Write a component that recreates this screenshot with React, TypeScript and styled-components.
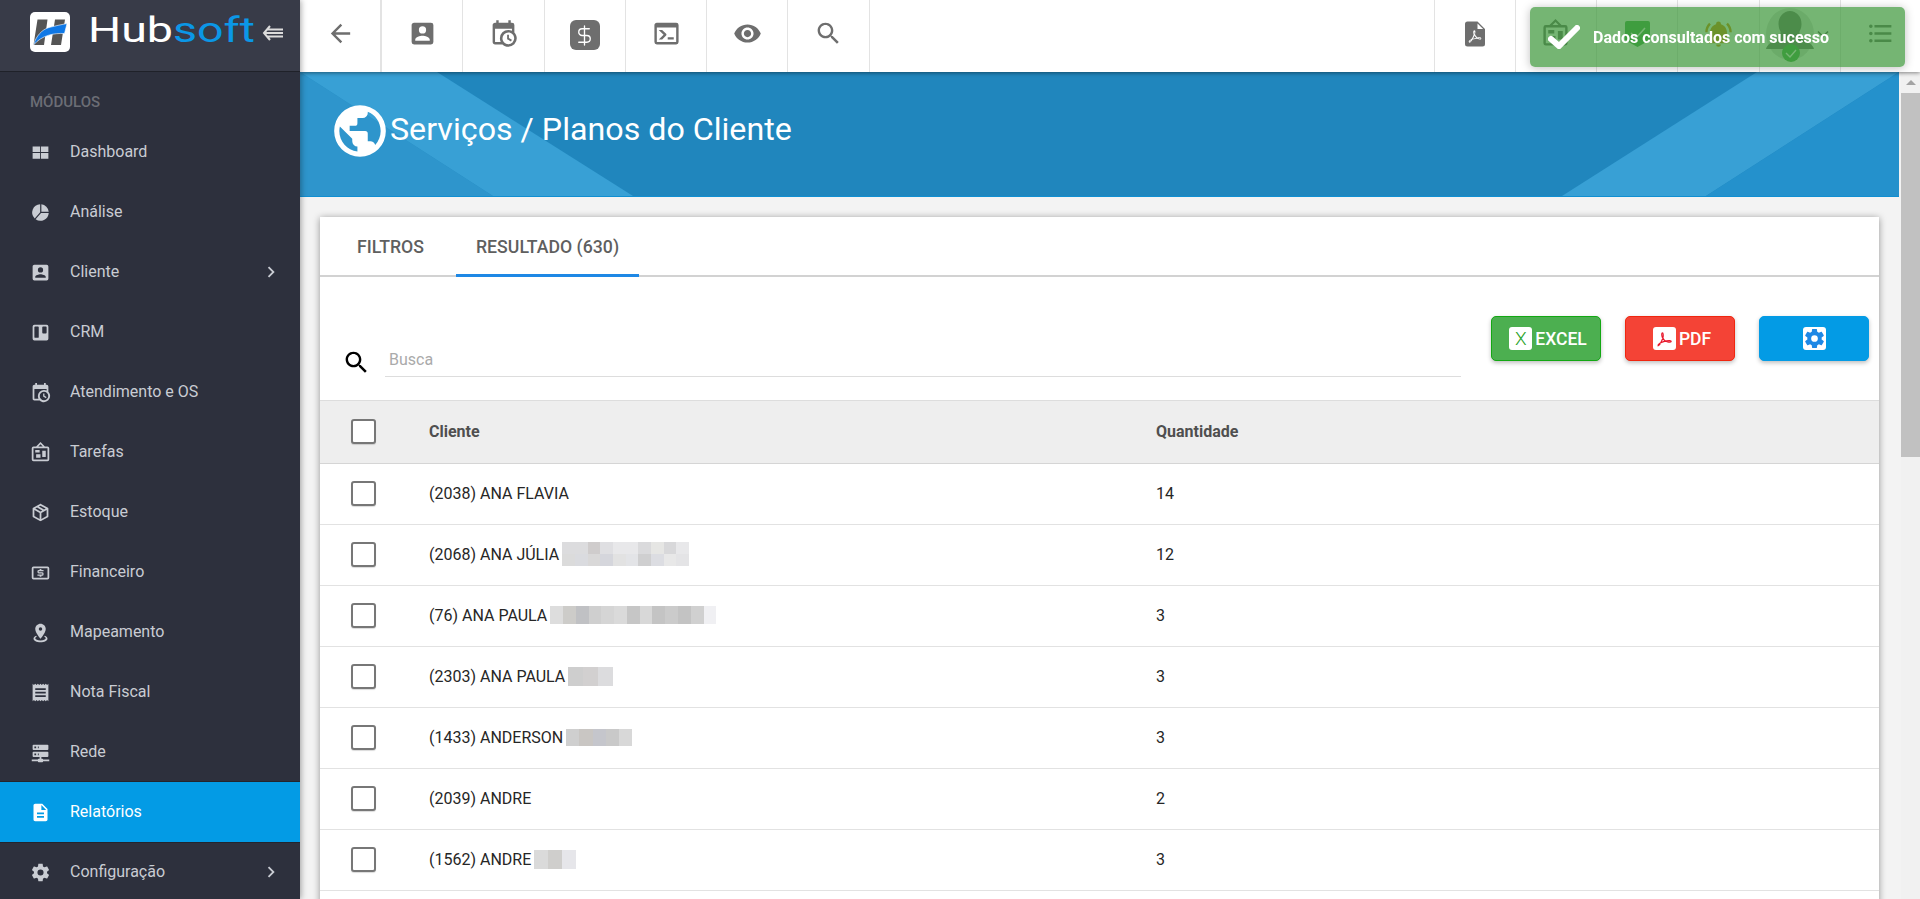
import React, { FC } from 'react'
import styled, { createGlobalStyle } from 'styled-components'
import { DollarSign } from 'lucide-react'

let paths = {
	back: 'M20 11H7.83l5.59-5.59L12 4l-8 8 8 8 1.41-1.41L7.83 13H20v-2z',
	accountBox: 'M6,17C6,15 10,13.9 12,13.9C14,13.9 18,15 18,17V18H6M15,9A3,3 0 0,1 12,12A3,3 0 0,1 9,9A3,3 0 0,1 12,6A3,3 0 0,1 15,9M3,5V19A2,2 0 0,0 5,21H19A2,2 0 0,0 21,19V5A2,2 0 0,0 19,3H5C3.89,3 3,3.9 3,5Z',
	calendarClock: 'M15,13H16.5V15.82L18.94,17.23L18.19,18.53L15,16.69V13M19,8H5V19H9.67C9.24,18.09 9,17.07 9,16A7,7 0 0,1 16,9C17.07,9 18.09,9.24 19,9.67V8M5,21C3.89,21 3,20.1 3,19V5C3,3.89 3.89,3 5,3H6V1H8V3H16V1H18V3H19A2,2 0 0,1 21,5V11.1C22.24,12.36 23,14.09 23,16A7,7 0 0,1 16,23C14.09,23 12.36,22.24 11.1,21H5M16,11.15A4.85,4.85 0 0,0 11.15,16C11.15,18.68 13.32,20.85 16,20.85A4.85,4.85 0 0,0 20.85,16C20.85,13.32 18.68,11.15 16,11.15Z',
	console: 'M20,19V7H4V19H20M20,3A2,2 0 0,1 22,5V19A2,2 0 0,1 20,21H4A2,2 0 0,1 2,19V5C2,3.89 2.9,3 4,3H20M13,17V15H18V17H13M9.58,13L5.57,9H8.4L11.7,12.3C12.09,12.69 12.09,13.33 11.7,13.72L8.42,17H5.59L9.58,13Z',
	eye: 'M12 4.5C7 4.5 2.73 7.61 1 12c1.73 4.39 6 7.5 11 7.5s9.27-3.11 11-7.5c-1.73-4.39-6-7.5-11-7.5zM12 17c-2.76 0-5-2.24-5-5s2.24-5 5-5 5 2.24 5 5-2.24 5-5 5zm0-8c-1.66 0-3 1.34-3 3s1.34 3 3 3 3-1.34 3-3-1.34-3-3-3z',
	search: 'M15.5 14h-.79l-.28-.27C15.41 12.59 16 11.11 16 9.5 16 5.91 13.09 3 9.5 3S3 5.91 3 9.5 5.91 16 9.5 16c1.61 0 3.09-.59 4.23-1.57l.27.28v.79l5 4.99L20.49 19l-4.99-5zm-6 0C7.01 14 5 11.99 5 9.5S7.01 5 9.5 5 14 7.01 14 9.5 11.99 14 9.5 14z',
	filePdf: 'M14,2L20,8V20A2,2 0 0,1 18,22H6A2,2 0 0,1 4,20V4A2,2 0 0,1 6,2H14M14,3.5V8H18.5L14,3.5M10.92,12.31C10.68,11.54 10.15,9.08 11.55,9.04C12.95,9 12.03,12.16 12.03,12.16C12.42,13.65 14.05,14.72 14.05,14.72C14.55,14.57 17.4,14.24 17,15.72C16.57,17.2 13.5,15.81 13.5,15.81C11.55,15.95 10.09,16.47 10.09,16.47C8.96,18.58 7.64,19.5 7.1,18.61C6.43,17.5 9.23,16.07 9.23,16.07C10.68,13.72 10.9,12.35 10.92,12.31M11.57,13.15C11.17,14.45 10.37,15.84 10.37,15.84C11.22,15.5 13.08,15.11 13.08,15.11C11.94,14.11 11.59,13.16 11.57,13.15M14.71,15.32C14.71,15.32 16.46,15.97 16.5,15.71C16.57,15.44 15.17,15.2 14.71,15.32M9.05,16.81C8.28,17.11 7.54,18.39 7.72,18.39C7.9,18.4 8.63,17.79 9.05,16.81M11.57,10.39C11.57,10.39 11.13,10.39 11.57,12.16C11.9,11.24 11.57,10.39 11.57,10.39Z',
	board: 'M12.04,2.5L9.53,5H14.53L12.04,2.5M4,7V20H20V7H4M12,0L17,5V5H20A2,2 0 0,1 22,7V20A2,2 0 0,1 20,22H4A2,2 0 0,1 2,20V7A2,2 0 0,1 4,5H7V5L12,0M7,18V14H12V18H7M14,17V10H18V17H14M6,12V9H11V12H6Z',
	bellRing: 'M21,19V20H3V19L5,17V11C5,7.9 7.03,5.17 10,4.29C10,4.19 10,4.1 10,4A2,2 0 0,1 12,2A2,2 0 0,1 14,4C14,4.1 14,4.19 14,4.29C16.97,5.17 19,7.9 19,11V17L21,19M14,21A2,2 0 0,1 12,23A2,2 0 0,1 10,21M19.75,3.19L18.33,4.61C20.04,6.3 21,8.6 21,11H23C23,8.07 21.84,5.25 19.75,3.19M1,11H3C3,8.6 3.96,6.3 5.67,4.61L4.25,3.19C2.16,5.25 1,8.07 1,11Z',
	list: 'M7,5H21V7H7V5M7,13V11H21V13H7M4,4.5A1.5,1.5 0 0,1 5.5,6A1.5,1.5 0 0,1 4,7.5A1.5,1.5 0 0,1 2.5,6A1.5,1.5 0 0,1 4,4.5M4,10.5A1.5,1.5 0 0,1 5.5,12A1.5,1.5 0 0,1 4,13.5A1.5,1.5 0 0,1 2.5,12A1.5,1.5 0 0,1 4,10.5M7,19V17H21V19H7M4,16.5A1.5,1.5 0 0,1 5.5,18A1.5,1.5 0 0,1 4,19.5A1.5,1.5 0 0,1 2.5,18A1.5,1.5 0 0,1 4,16.5Z',
	grid: 'M3 5h8.5v6.5H3zM12.5 5H21v6.5h-8.5zM3 12.5h8.5V19H3zM12.5 12.5H21V19h-8.5z',
	pie: 'M11.6 2.5V11.8L5.4 18.8A9.5 9.5 0 0 1 11.6 2.5ZM13 2.6A9.5 9.5 0 0 1 21.4 11H13ZM21.4 12.5A9.5 9.5 0 0 1 6.4 19.6L12.6 12.5Z',
	trello: 'M19,3H5A2,2 0 0,0 3,5V19A2,2 0 0,0 5,21H19A2,2 0 0,0 21,19V5A2,2 0 0,0 19,3M10,17A1,1 0 0,1 9,18H6A1,1 0 0,1 5,17V6A1,1 0 0,1 6,5H9A1,1 0 0,1 10,6V17M19,12A1,1 0 0,1 18,13H15A1,1 0 0,1 14,12V6A1,1 0 0,1 15,5H18A1,1 0 0,1 19,6V12Z',
	box: 'M21,16.5C21,16.88 20.79,17.21 20.47,17.38L12.57,21.82C12.41,21.94 12.21,22 12,22C11.79,22 11.59,21.94 11.43,21.82L3.53,17.38C3.21,17.21 3,16.88 3,16.5V7.5C3,7.12 3.21,6.79 3.53,6.62L11.43,2.18C11.59,2.06 11.79,2 12,2C12.21,2 12.41,2.06 12.57,2.18L20.47,6.62C20.79,6.79 21,7.12 21,7.5V16.5M12,4.15L10.11,5.22L16,8.61L17.96,7.5L12,4.15M6.04,7.5L12,10.85L13.96,9.75L8.08,6.35L6.04,7.5M5,15.91L11,19.29V12.58L5,9.21V15.91M19,15.91V9.21L13,12.58V19.29L19,15.91Z',
	cash: 'M4 5h16a2 2 0 0 1 2 2v11a2 2 0 0 1-2 2H4a2 2 0 0 1-2-2V7a2 2 0 0 1 2-2zm0 2v11h16V7H4zm7 1h2v1h2.5v1.5H10v1.25h4a1.5 1.5 0 0 1 1.5 1.5v1a1.5 1.5 0 0 1-1.5 1.5h-1v1h-2v-1H8.5v-1.5H14v-1.25h-4a1.5 1.5 0 0 1-1.5-1.5v-1A1.5 1.5 0 0 1 10 9h1z',
	mapMarker: 'M12,2C15.31,2 18,4.66 18,7.95C18,12.41 12,19 12,19C12,19 6,12.41 6,7.95C6,4.66 8.69,2 12,2M12,6A2,2 0 0,0 10,8A2,2 0 0,0 12,10A2,2 0 0,0 14,8A2,2 0 0,0 12,6M20,19C20,21.21 16.42,23 12,23C7.58,23 4,21.21 4,19C4,17.71 5.22,16.56 7.11,15.83L7.75,16.74C6.67,17.19 6,17.81 6,18.5C6,19.88 8.69,21 12,21C15.31,21 18,19.88 18,18.5C18,17.81 17.33,17.19 16.25,16.74L16.89,15.83C18.78,16.56 20,17.71 20,19Z',
	receipt: 'M3,22L4.5,20.5L6,22L7.5,20.5L9,22L10.5,20.5L12,22L13.5,20.5L15,22L16.5,20.5L18,22L19.5,20.5L21,22V2L19.5,3.5L18,2L16.5,3.5L15,2L13.5,3.5L12,2L10.5,3.5L9,2L7.5,3.5L6,2L4.5,3.5L3,2M18,9H6V7H18M18,13H6V11H18M18,17H6V15H18V17Z',
	server: 'M13,19H14A1,1 0 0,1 15,20H22V22H15A1,1 0 0,1 14,23H10A1,1 0 0,1 9,22H2V20H9A1,1 0 0,1 10,19H11V17H4A1,1 0 0,1 3,16V12A1,1 0 0,1 4,11H20A1,1 0 0,1 21,12V16A1,1 0 0,1 20,17H13V19M4,3H20A1,1 0 0,1 21,4V8A1,1 0 0,1 20,9H4A1,1 0 0,1 3,8V4A1,1 0 0,1 4,3M9,7H10V5H9V7M9,15H10V13H9V15M5,5V7H7V5H5M5,13V15H7V13H5Z',
	description: 'M14 2H6c-1.1 0-1.99.9-1.99 2L4 20c0 1.1.89 2 1.99 2H18c1.1 0 2-.9 2-2V8l-6-6zm2 16H8v-2h8v2zm0-4H8v-2h8v2zm-3-5V3.5L18.5 9H13z',
	cog: 'M12,15.5A3.5,3.5 0 0,1 8.5,12A3.5,3.5 0 0,1 12,8.5A3.5,3.5 0 0,1 15.5,12A3.5,3.5 0 0,1 12,15.5M19.43,12.97C19.47,12.65 19.5,12.33 19.5,12C19.5,11.67 19.47,11.34 19.43,11L21.54,9.37C21.73,9.22 21.78,8.95 21.66,8.73L19.66,5.27C19.54,5.05 19.27,4.96 19.05,5.05L16.56,6.05C16.04,5.66 15.5,5.32 14.87,5.07L14.5,2.42C14.46,2.18 14.25,2 14,2H10C9.75,2 9.54,2.18 9.5,2.42L9.13,5.07C8.5,5.32 7.96,5.66 7.44,6.05L4.95,5.05C4.73,4.96 4.46,5.05 4.34,5.27L2.34,8.73C2.21,8.95 2.27,9.22 2.46,9.37L4.57,11C4.53,11.34 4.5,11.67 4.5,12C4.5,12.33 4.53,12.65 4.57,12.97L2.46,14.63C2.27,14.78 2.21,15.05 2.34,15.27L4.34,18.73C4.46,18.95 4.73,19.03 4.95,18.95L7.44,17.94C7.96,18.34 8.5,18.68 9.13,18.93L9.5,21.58C9.54,21.82 9.75,22 10,22H14C14.25,22 14.46,21.82 14.5,21.58L14.87,18.93C15.5,18.67 16.04,18.34 16.56,17.94L19.05,18.95C19.27,19.03 19.54,18.95 19.66,18.73L21.66,15.27C21.78,15.05 21.73,14.78 21.54,14.63L19.43,12.97Z',
	chevron: 'M10 6L8.59 7.41 13.17 12l-4.58 4.59L10 18l6-6z',
	earth: 'M17.9,17.39C17.64,16.59 16.89,16 16,16H15V13A1,1 0 0,0 14,12H8V10H10A1,1 0 0,0 11,9V7H13A2,2 0 0,0 15,5V4.59C17.93,5.77 20,8.64 20,12C20,14.08 19.2,15.97 17.9,17.39M11,19.93C7.05,19.44 4,16.08 4,12C4,11.38 4.08,10.78 4.21,10.21L9,15V16A2,2 0 0,0 11,18M12,2A10,10 0 0,0 2,12A10,10 0 0,0 12,22A10,10 0 0,0 22,12A10,10 0 0,0 12,2Z',
}

let GlobalStyle = createGlobalStyle`
	html, body, #root {
		margin: 0;
		height: 100%;
	}

	body {
		font-family: Roboto, "Liberation Sans", sans-serif;
		background: #f3f3f3;
		overflow: hidden;
	}
`

let Layout = styled.div`
	display: flex;
	height: 100vh;
	overflow: hidden;
`

let Sidebar = styled.aside`
	flex: 0 0 300px;
	display: flex;
	flex-direction: column;
	overflow: hidden;
	background: #2d303d;
	color: #c9ccd3;
	box-shadow: 1px 0 6px rgba(0, 0, 0, .35);
	position: relative;
	z-index: 3;
`

let Brand = styled.div`
	flex: 0 0 72px;
	box-sizing: border-box;
	display: flex;
	align-items: flex-start;
	padding: 12px 0 0 30px;
	background: #383b48;
	border-bottom: 1px solid #1f2129;
`

let LogoMark = styled.svg`
	flex: 0 0 40px;
	width: 40px;
	height: 40px;
`

let Wordmark = styled.div`
	width: 165px;
	margin: 0 0 0 18px;
	font-size: 35px;
	line-height: 38px;
	font-weight: 400;
	color: #fff;
	white-space: nowrap;
	transform: scaleX(1.33);
	transform-origin: left center;

	span {
		color: #0b97e6;
	}
`

let CollapseIcon = styled.svg`
	width: 22px;
	height: 16px;
	margin: 13px 0 0 9px;
	fill: none;
	stroke: #dcdcdc;
	stroke-width: 2;
`

let SectionLabel = styled.div`
	flex: 0 0 50px;
	box-sizing: border-box;
	padding: 20px 0 0 30px;
	font-size: 15px;
	line-height: 20px;
	font-weight: 500;
	color: #6b6d75;
`

let MenuItem = styled.div<{ $active?: boolean }>`
	flex: 0 0 60px;
	display: flex;
	align-items: center;
	padding: 0 18px 0 30px;
	font-size: 16px;
	background: ${p => p.$active ? '#039be5' : 'transparent'};
	color: ${p => p.$active ? '#fff' : '#c9ccd3'};
	box-shadow: ${p => p.$active ? '0 -1px 0 #23252e, 0 1px 0 #23252e' : 'none'};
`

let MenuLabel = styled.span`
	margin: 0 0 2px 19px;
	flex: 1;
`

let Glyph = styled.svg<{ $size: number, $evenodd?: boolean }>`
	flex: 0 0 ${p => p.$size}px;
	width: ${p => p.$size}px;
	height: ${p => p.$size}px;
	fill: currentColor;
	fill-rule: ${p => p.$evenodd ? 'evenodd' : 'nonzero'};
`

let Icon: FC<{ d: string, size?: number, evenodd?: boolean, className?: string }> = ({ d, size = 21, evenodd, className }) => (
	<Glyph $size={size} $evenodd={evenodd} className={className} viewBox="0 0 24 24"><path d={d} /></Glyph>
)

let Main = styled.div`
	flex: 1;
	min-width: 0;
	display: flex;
	flex-direction: column;
`

let TopBar = styled.header`
	flex: 0 0 72px;
	display: flex;
	background: #fff;
	color: #6e6e6e;
	box-shadow: 0 1px 4px rgba(0, 0, 0, .45);
	position: relative;
	z-index: 2;
`

let TopCell = styled.div<{ $side?: 'left' | 'right' }>`
	flex: 0 0 81.3px;
	box-sizing: border-box;
	display: flex;
	align-items: center;
	justify-content: center;
	padding-bottom: 5px;
	border-right: ${p => p.$side === 'left' ? '1px solid #e3e3e3' : '0'};
	border-left: ${p => p.$side === 'right' ? '1px solid #e3e3e3' : '0'};

	&:first-child {
		flex-basis: 82px;
		border-right-width: 2px;
	}

	&:last-child {
		flex-basis: 80px;
	}
`

let TopSpacer = styled.div`
	flex: 1;
`

let MoneyBadge = styled.div`
	width: 30px;
	height: 30px;
	margin-top: 3px;
	border-radius: 6px;
	background: #6e6e6e;
	color: #fff;
	display: flex;
	align-items: center;
	justify-content: center;
`

let BellIcon = styled(Icon)`
	color: #dc8a0c;
`

let Avatar = styled.svg`
	width: 50px;
	height: 58px;
	margin-top: 5px;
	margin-left: -6px;
`

let TinyChevron = styled.svg`
	width: 12px;
	height: 8px;
	margin-left: 2px;
	fill: none;
	stroke: #5d5d5d;
	stroke-width: 1.6;
`

let Toast = styled.div`
	position: fixed;
	top: 7px;
	left: 1530px;
	width: 375px;
	height: 60px;
	box-sizing: border-box;
	display: flex;
	align-items: center;
	padding-left: 18px;
	border-radius: 5px;
	background: rgba(59, 150, 56, .7);
	box-shadow: 0 1px 10px rgba(0, 0, 0, .25);
	color: #fff;
	font-size: 16px;
	font-weight: 700;
	z-index: 10;
`

let ToastCheck = styled.svg`
	flex: 0 0 32px;
	width: 32px;
	height: 24px;
	margin-right: 13px;
	fill: none;
	stroke: #fff;
	stroke-width: 6;
	stroke-linecap: round;
`

let Body = styled.div`
	flex: 1;
	min-height: 0;
	display: flex;
`

let Content = styled.main`
	flex: 1;
	min-width: 0;
	overflow: hidden;
`

let Banner = styled.section`
	height: 125px;
	box-sizing: border-box;
	position: relative;
	display: flex;
	align-items: center;
	padding: 0 0 6px 34px;
	background: #2086bd;
	border-bottom: 1px solid #0f8fd2;
	color: #fff;
`

let BannerArt = styled.svg`
	position: absolute;
	inset: 0;
	width: 100%;
	height: 100%;
`

let BannerIcon = styled(Icon)`
	position: relative;
	margin-left: -5px;
`

let BannerTitle = styled.h1`
	position: relative;
	margin: 0 0 4px -1px;
	font-size: 32.2px;
	line-height: 40px;
	font-weight: 400;
`

let Card = styled.section`
	margin: 20px 20px 0;
	min-height: 700px;
	background: #fff;
	box-shadow: 0 1px 7px rgba(0, 0, 0, .4);
`

let Tabs = styled.nav`
	height: 60px;
	box-sizing: border-box;
	display: flex;
	gap: 12px;
	padding-left: 17px;
	border-bottom: 2px solid #d2d2d2;
`

let Tab = styled.div<{ $active?: boolean }>`
	height: 60px;
	box-sizing: border-box;
	padding: 2px 20px 0;
	display: flex;
	align-items: center;
	font-size: 17.7px;
	font-weight: 500;
	color: #5f5f5f;
	border-bottom: 3px solid ${p => p.$active ? '#1e88e5' : 'transparent'};
`

let Toolbar = styled.div`
	height: 123px;
	box-sizing: border-box;
	display: flex;
	align-items: flex-end;
	gap: 30px;
	padding: 0 10px 23px 22px;
`

let SearchBox = styled.label`
	flex: 1;
	display: flex;
	align-items: center;
	gap: 14px;
	color: #000;

	svg {
		margin-top: 4px;
	}
`

let SearchInput = styled.input`
	flex: 1;
	height: 34px;
	box-sizing: border-box;
	padding: 0 4px;
	border: 0;
	border-bottom: 1px solid #ddd;
	outline: 0;
	background: transparent;
	font-family: inherit;
	font-size: 16px;

	&::placeholder {
		color: #aaa;
		opacity: 1;
	}
`

let Actions = styled.div`
	display: flex;
	gap: 24px;
	margin-bottom: 16px;
`

let ActionButton = styled.button<{ $bg: string, $edge: string, $labelled?: boolean }>`
	width: 110px;
	height: 45px;
	display: flex;
	align-items: center;
	justify-content: center;
	gap: 3px;
	padding: 0 0 0 ${p => p.$labelled ? '4px' : '0'};
	border: 1px solid ${p => p.$edge};
	border-radius: 5px;
	background: ${p => p.$bg};
	box-shadow: 0 2px 4px rgba(0, 0, 0, .25);
	color: #fff;
	font-family: inherit;
	font-size: 17.5px;
	font-weight: 500;
`

let ButtonIcon = styled.span<{ $color: string }>`
	width: 23px;
	height: 23px;
	display: flex;
	align-items: center;
	justify-content: center;
	border-radius: 3px;
	background: #fff;
	color: ${p => p.$color};
	font-size: 19px;
	font-weight: 300;
`

let Row = styled.div<{ $head?: boolean }>`
	height: ${p => p.$head ? '64px' : '61px'};
	box-sizing: border-box;
	display: grid;
	grid-template-columns: 78px 727px 1fr;
	align-items: center;
	padding: 0 0 2px 31px;
	font-size: 16px;
	color: #262626;
	background: ${p => p.$head ? '#eee' : '#fff'};
	border-top: ${p => p.$head ? '1px solid #ddd' : '0'};
	border-bottom: 1px solid ${p => p.$head ? '#d5d5d5' : '#e2e2e2'};
`

let HeadCell = styled.div`
	font-weight: 700;
	font-size: 16px;
	color: #4f4f4f;
`

let Checkbox = styled.span`
	display: block;
	width: 25px;
	height: 25px;
	box-sizing: border-box;
	border: 2px solid #777;
	border-radius: 3px;
	background: #fff;
	box-shadow: 0 1px 1px rgba(0, 0, 0, .15);
`

let NameCell = styled.div`
	display: flex;
	align-items: center;
	gap: 3px;
`

let Mosaic = styled.div<{ $cols: number, $w: number, $h: number }>`
	display: grid;
	grid-template-columns: repeat(${p => p.$cols}, 1fr);
	grid-auto-rows: 1fr;
	width: ${p => p.$w}px;
	height: ${p => p.$h}px;
`

let MosaicCell = styled.span<{ $c: string }>`
	background: ${p => p.$c};
`

let ScrollTrack = styled.div`
	flex: 0 0 21px;
	box-sizing: border-box;
	padding-left: 2px;
	display: flex;
	flex-direction: column;
	background: #f3f3f3;
`

let ScrollArrow = styled.div`
	flex: 0 0 21px;
	display: flex;
	align-items: center;
	justify-content: center;
	background: #f1f1f1;

	&::before {
		content: '';
		border-left: 5px solid transparent;
		border-right: 5px solid transparent;
		border-bottom: 5px solid #a3a3a3;
	}
`

let ScrollThumb = styled.div`
	flex: 0 0 364px;
	background: #c1c1c1;
`

let ScrollRest = styled.div`
	flex: 1;
	background: #f1f1f1;
`

let menu = [
	{ label: 'Dashboard', d: paths.grid },
	{ label: 'Análise', d: paths.pie },
	{ label: 'Cliente', d: paths.accountBox, more: true },
	{ label: 'CRM', d: paths.trello },
	{ label: 'Atendimento e OS', d: paths.calendarClock },
	{ label: 'Tarefas', d: paths.board },
	{ label: 'Estoque', d: paths.box },
	{ label: 'Financeiro', d: paths.cash },
	{ label: 'Mapeamento', d: paths.mapMarker },
	{ label: 'Nota Fiscal', d: paths.receipt },
	{ label: 'Rede', d: paths.server },
	{ label: 'Relatórios', d: paths.description, active: true },
	{ label: 'Configuração', d: paths.cog, more: true },
]

type Blur = { cols: number, w: number, h: number, colors: string[] }

let clients: { name: string, qty: number, blur?: Blur }[] = [
	{ name: '(2038) ANA FLAVIA', qty: 14 },
	{
		name: '(2068) ANA JÚLIA', qty: 12, blur: {
			cols: 10, w: 127, h: 24, colors: [
				'#dcdcde', '#dcdcde', '#cfcccc', '#dfdfe2', '#e8e8ea', '#e8e8ea', '#dadadc', '#e6e6e4', '#d8d8da', '#e8e8ea',
				'#dbdbdb', '#dadbdf', '#d9d8d8', '#d5d6dc', '#e2e2e2', '#e3e4e7', '#cfcfd0', '#dcdde2', '#e8e8e8', '#e4e4e6',
			],
		},
	},
	{
		name: '(76) ANA PAULA', qty: 3, blur: {
			cols: 13, w: 166, h: 18, colors: [
				'#dddddd', '#cdccc9', '#c0c1c4', '#cfcfcf', '#d5d5d5', '#dadada', '#c6c6c6', '#d8d8d8', '#c4c4c4', '#cbcbcb', '#c3c3c3', '#d0d0d0', '#f0f0f3',
			],
		},
	},
	{ name: '(2303) ANA PAULA', qty: 3, blur: { cols: 3, w: 45, h: 19, colors: ['#cecece', '#d2d0d0', '#dcdcde'] } },
	{ name: '(1433) ANDERSON', qty: 3, blur: { cols: 5, w: 66, h: 17, colors: ['#cfcfcf', '#c9c6c3', '#c5c6cc', '#c9c9c9', '#d8d8d8'] } },
	{ name: '(2039) ANDRE', qty: 2 },
	{ name: '(1562) ANDRE', qty: 3, blur: { cols: 3, w: 42, h: 19, colors: ['#dadada', '#cfcecc', '#e6e6ea'] } },
]

export default function App() {
	return (
		<Layout>
			<GlobalStyle />
			<Sidebar>
				<Brand>
					<LogoMark viewBox="0 0 40 40">
						<rect width="40" height="40" rx="5" fill="#fff" />
						<path d="M7.5 7.500h10L14 33H3.500zM25 7.500h10L31 33H21z" fill="#555" />
						<path d="M3.500 33C6 24 12 17.500 19 15.500C25 13.800 31 12.800 37 11.500L34.500 21.500C24 21 12 23 3.500 33Z" fill="#0f78e6" stroke="#fff" strokeWidth=".6" />
					</LogoMark>
					<Wordmark>Hub<span>soft</span></Wordmark>
					<CollapseIcon viewBox="0 0 22 16">
						<path d="M8 1L2 8l6 7M5 4.500h16M3 8h18M5 11.500h16" />
					</CollapseIcon>
				</Brand>
				<SectionLabel>MÓDULOS</SectionLabel>
				{menu.map(item => (
					<MenuItem key={item.label} $active={item.active}>
						<Icon d={item.d} />
						<MenuLabel>{item.label}</MenuLabel>
						{item.more && <Icon d={paths.chevron} size={22} />}
					</MenuItem>
				))}
			</Sidebar>
			<Main>
				<TopBar>
					<TopCell $side="left"><Icon d={paths.back} size={29} /></TopCell>
					<TopCell $side="left"><Icon d={paths.accountBox} size={29} /></TopCell>
					<TopCell $side="left"><Icon d={paths.calendarClock} size={29} /></TopCell>
					<TopCell $side="left"><MoneyBadge><DollarSign size={23} strokeWidth={1.4} /></MoneyBadge></TopCell>
					<TopCell $side="left"><Icon d={paths.console} size={29} /></TopCell>
					<TopCell $side="left"><Icon d={paths.eye} size={29} /></TopCell>
					<TopCell $side="left"><Icon d={paths.search} size={29} /></TopCell>
					<TopSpacer />
					<TopCell $side="right"><Icon d={paths.filePdf} size={30} evenodd /></TopCell>
					<TopCell $side="right"><Icon d={paths.board} size={29} /></TopCell>
					<TopCell $side="right">
						<svg width="25" height="26" viewBox="0 0 25 26">
							<path d="M0 2a2 2 0 0 1 2-2h21a2 2 0 0 1 2 2v17l-12.500 7L0 19z" fill="#4caf50" />
							<path d="M6 12l5 5 9-10" fill="none" stroke="#fff" strokeWidth="1.6" />
						</svg>
					</TopCell>
					<TopCell $side="right"><BellIcon d={paths.bellRing} size={29} /></TopCell>
					<TopCell $side="right">
						<Avatar viewBox="0 0 50 58">
							<ellipse cx="25" cy="27" rx="24" ry="26" fill="#dedede" />
							<ellipse cx="25" cy="17" rx="11.500" ry="13" fill="#757575" />
							<path d="M16 22h18l1 8 4 3c5 2 9 5 10 9H1c1-4 5-7 10-9l4-3z" fill="#757575" />
							<circle cx="26" cy="46" r="9" fill="#4caf50" />
							<path d="M21 46l4 4 6-7" fill="none" stroke="#fff" strokeWidth="1.4" />
						</Avatar>
						<TinyChevron viewBox="0 0 12 8"><path d="M1 1.500l5 5 5-5" /></TinyChevron>
					</TopCell>
					<TopCell $side="right"><Icon d={paths.list} size={29} /></TopCell>
				</TopBar>
				<Body>
					<Content>
						<Banner>
							<BannerArt viewBox="0 0 1599 125" preserveAspectRatio="none">
								<path d="M0 0L193 125H0Z" fill="#2e95cc" />
								<path d="M0 0H137L333 125H193Z" fill="#38a0d5" />
								<path d="M1262 125L1457 0H1599L1406 125Z" fill="#38a0d5" />
								<path d="M1599 0V125H1406Z" fill="#2491cc" />
							</BannerArt>
							<BannerIcon d={paths.earth} size={62} />
							<BannerTitle>Serviços / Planos do Cliente</BannerTitle>
						</Banner>
						<Card>
							<Tabs>
								<Tab>FILTROS</Tab>
								<Tab $active>RESULTADO (630)</Tab>
							</Tabs>
							<Toolbar>
								<SearchBox>
									<Icon d={paths.search} size={29} />
									<SearchInput placeholder="Busca" />
								</SearchBox>
								<Actions>
									<ActionButton $bg="#4caf50" $edge="#13a813" $labelled>
										<ButtonIcon $color="#27a327">X</ButtonIcon>
										EXCEL
									</ActionButton>
									<ActionButton $bg="#f44336" $edge="#f0260f" $labelled>
										<ButtonIcon $color="#e8182c">
											<svg width="19" height="19" viewBox="0 0 24 24" fill="none" stroke="currentColor" strokeWidth="1.5">
												<path d="M4 21c2-1 4-4 6-10 .6-2 .6-6-.6-6-1.300 0-1 3.500-.2 5.500 1.200 3 3.800 5 6.800 5.800 2 .5 4.500.5 4.500-.5 0-1.200-3-1.300-6-.7-3.500.7-8.500 2.500-10.500 4.900z" />
											</svg>
										</ButtonIcon>
										PDF
									</ActionButton>
									<ActionButton $bg="#039be5" $edge="#039be5">
										<ButtonIcon $color="#1e88e5"><Icon d={paths.cog} size={23} /></ButtonIcon>
									</ActionButton>
								</Actions>
							</Toolbar>
							<Row $head>
								<Checkbox />
								<HeadCell>Cliente</HeadCell>
								<HeadCell>Quantidade</HeadCell>
							</Row>
							{clients.map(client => (
								<Row key={client.name}>
									<Checkbox />
									<NameCell>
										{client.name}
										{client.blur && (
											<Mosaic $cols={client.blur.cols} $w={client.blur.w} $h={client.blur.h}>
												{client.blur.colors.map((c, i) => <MosaicCell key={i} $c={c} />)}
											</Mosaic>
										)}
									</NameCell>
									<div>{client.qty}</div>
								</Row>
							))}
						</Card>
					</Content>
					<ScrollTrack>
						<ScrollArrow />
						<ScrollThumb />
						<ScrollRest />
					</ScrollTrack>
				</Body>
			</Main>
			<Toast>
				<ToastCheck viewBox="0 0 32 24"><path d="M3 14l8 7L29 3" /></ToastCheck>
				Dados consultados com sucesso
			</Toast>
		</Layout>
	)
}
